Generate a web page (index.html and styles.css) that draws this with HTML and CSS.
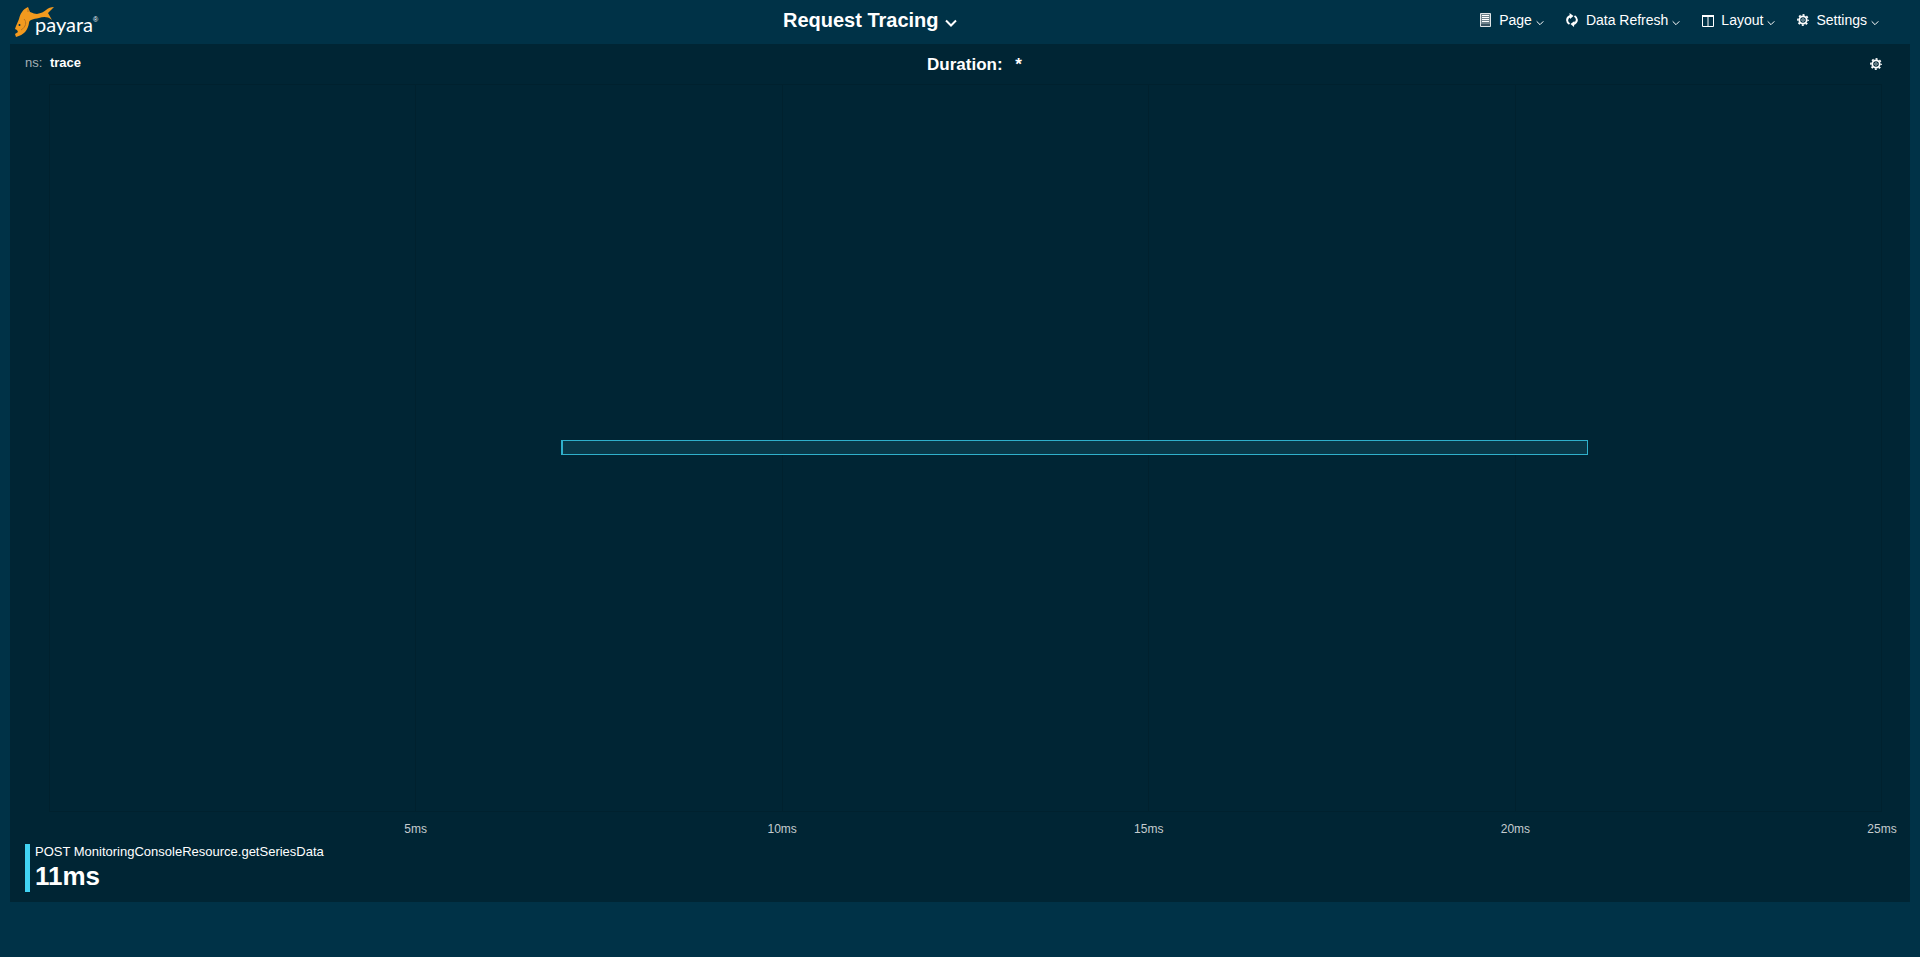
FILE: index.html
```html
<!DOCTYPE html>
<html lang="en">
<head>
<meta charset="utf-8">
<title>Request Tracing</title>
<link rel="stylesheet" href="styles.css">
</head>
<body>
<svg class="defs" width="0" height="0" aria-hidden="true">
  <symbol id="chevron" viewBox="0 0 12 8"><path d="M1 1.5 L6 6.5 L11 1.5" fill="none" stroke="currentColor"/></symbol>
  <symbol id="gear" viewBox="0 0 12 12">
    <circle cx="6" cy="6" r="3.7" fill="none" stroke="currentColor" stroke-width="1.8"/>
    <circle cx="6" cy="6" r="5.1" fill="none" stroke="currentColor" stroke-width="1.6" stroke-dasharray="2 2.005" stroke-dashoffset="1"/>
    <circle cx="6" cy="6" r="1.3" fill="none" stroke="currentColor" stroke-width=".6"/>
  </symbol>
</svg>
<header class="topbar">
  <a class="logo" href="#" aria-label="payara home">
    <svg class="logo-mark" width="78" height="32" viewBox="0 0 78 32">
      <path d="M4 13 C5 8 8 3 13 1 L15 6 C18 7 20 8 22 8 C26 7 29 6 31 4 C33 2 36 1 39 1 L33 7 L37 14 C32 10 28 11 24 12 C18 13 14 14 14 17 C13 24 9 29 1 31 L0 28 L3 26 L2 24 L0 23 C1 19 3 16 4 13 Z" fill="#f39a1e"/>
      <circle cx="4.500" cy="19" r="1" fill="#003247"/>
      <path d="M9 13 C12 16 11 21 6 24 M13 3 V6" fill="none" stroke="#b8741e"/>
      <text class="logo-text" x="20" y="26">payara</text>
    </svg><span class="logo-reg">®</span>
  </a>
  <h1 class="page-title"><button class="title-button" type="button">Request Tracing<svg class="title-chevron" width="12" height="8"><use href="#chevron"/></svg></button></h1>
  <nav class="menu">
    <button class="menu-item" type="button">
      <svg class="menu-icon" width="11" height="14" viewBox="0 0 11 14"><path d="M.5 .5 H10.500 V13.500 H.5 Z" fill="#6f828c" stroke="#dfe5e8"/><path d="M2 2.500 H9 M2 4.500 H9 M2 6.500 H9 M2 8.500 H9" stroke="#fff"/><path d="M1 12 H10" stroke="#3c5462" stroke-width="2"/></svg>
      Page<svg class="chevron" width="8" height="6"><use href="#chevron"/></svg>
    </button>
    <button class="menu-item" type="button">
      <svg class="menu-icon" width="12" height="14" viewBox="0 0 12 14"><path d="M3.500 11 C.2 9 .2 4.500 4.500 3 M8.500 3 C11.800 5 11.800 9.500 7.500 11" fill="none" stroke="#fff" stroke-width="2"/><path d="M3.500 0 L7.500 3 L4 6 Z M8.500 8 L4.500 11 L8 14 Z" fill="#fff"/></svg>
      Data Refresh<svg class="chevron" width="8" height="6"><use href="#chevron"/></svg>
    </button>
    <button class="menu-item" type="button">
      <svg class="menu-icon icon-near icon-low" width="12" height="12" viewBox="0 0 12 12"><path d="M.5 .5 H11.500 V11.500 H.5 Z M6 1 V11" fill="none" stroke="#fff"/><path d="M0 1 H12" stroke="#fff" stroke-width="2"/></svg>
      Layout<svg class="chevron" width="8" height="6"><use href="#chevron"/></svg>
    </button>
    <button class="menu-item" type="button">
      <svg class="menu-icon icon-near" width="12" height="12"><use href="#gear"/></svg>
      Settings<svg class="chevron" width="8" height="6"><use href="#chevron"/></svg>
    </button>
  </nav>
</header>
<main class="widget">
  <div class="widget-head">
    <p class="series">ns: <strong>trace</strong></p>
    <h2 class="widget-title">Duration: <span class="star">*</span></h2>
    <button class="widget-settings" type="button" aria-label="Widget settings"><svg width="12" height="12"><use href="#gear"/></svg></button>
  </div>
  <div class="chart">
    <div class="plot">
      <i class="column"></i><i class="column"></i><i class="column"></i><i class="column"></i><i class="column"></i>
      <div class="span" style="left:27.9%;width:56.1%"></div>
    </div>
    <div class="axis"><span>5ms</span><span>10ms</span><span>15ms</span><span>20ms</span><span>25ms</span></div>
  </div>
  <div class="legend">
    <div class="legend-label">POST MonitoringConsoleResource.getSeriesData</div>
    <strong class="legend-value">11ms</strong>
  </div>
</main>
</body>
</html>
```
FILE: styles.css
```css
* { box-sizing: border-box; }
body {
  margin: 0;
  min-height: 100vh;
  background: #003247;
  color: #fff;
  font-family: "Liberation Sans", Arial, sans-serif;
  font-size: 14px;
}
h1, h2, p { margin: 0; }
button {
  padding: 0;
  border: 0;
  background: none;
  color: inherit;
  font: inherit;
  cursor: pointer;
}
.defs { position: absolute; }
.topbar {
  display: grid;
  grid-template-columns: 41.2% 1fr auto;
  align-items: center;
  height: 44px;
  padding: 0 41px 4px 15px;
}
.logo { display: flex; margin-top: 3px; color: #fff; text-decoration: none; }
.logo-text { fill: #fff; font: 20px Lato, sans-serif; }
.logo-reg { font-size: 7px; line-height: 8px; margin-top: 10px; }
.page-title { font-size: 20px; line-height: 24px; }
.title-button { display: flex; align-items: center; }
.title-chevron { margin: 6px 0 0 6px; stroke-width: 2; }
.menu { display: flex; gap: 22px; }
.menu-item { display: flex; align-items: center; line-height: 20px; }
.menu-icon { margin-right: 8px; }
.icon-near { margin-right: 7px; }
.icon-low { margin-top: 2px; }
.chevron { margin: 5px 0 0 4px; stroke-width: 1.5; }
.widget {
  margin: 0 10px;
  padding: 11px 15px 10px;
  background: #002534;
  overflow: hidden;
}
.widget-head {
  display: grid;
  grid-template-columns: 1fr auto 1fr;
  height: 29px;
}
.series { color: #a5b0b5; font-size: 13px; line-height: 16px; }
.series strong { margin-left: 4px; color: #fff; }
.widget-title { padding-left: 29px; font-size: 17px; line-height: 20px; }
.star { margin-left: 8px; }
.widget-settings { justify-self: end; align-self: start; display: flex; margin: 3px 13px 0 0; }
.chart { margin: 0 13px 0 24px; }
.plot {
  position: relative;
  display: flex;
  height: calc(100vh - 229px);
  border: 1px solid #00212e;
}
.column { flex: 1; border-right: 1px solid #00212e; }
.column:nth-of-type(5) { border-right: 0; }
.span {
  position: absolute;
  top: calc(50% - 8px);
  height: 15px;
  border: 1px solid #2fb0cb;
  border-left-width: 2px;
  background: #083848;
}
.axis {
  display: flex;
  margin: 9px -10% 0 10%;
  color: #c5cccf;
  font-size: 12px;
  line-height: 16px;
}
.axis span { flex: 1; text-align: center; }
.legend {
  margin-top: 7px;
  height: 48px;
  padding-left: 5px;
  border-left: 5px solid #41d3f3;
}
.legend-label { font-size: 13px; line-height: 16px; }
.legend-value { display: block; font-size: 26px; line-height: 32px; }
```
